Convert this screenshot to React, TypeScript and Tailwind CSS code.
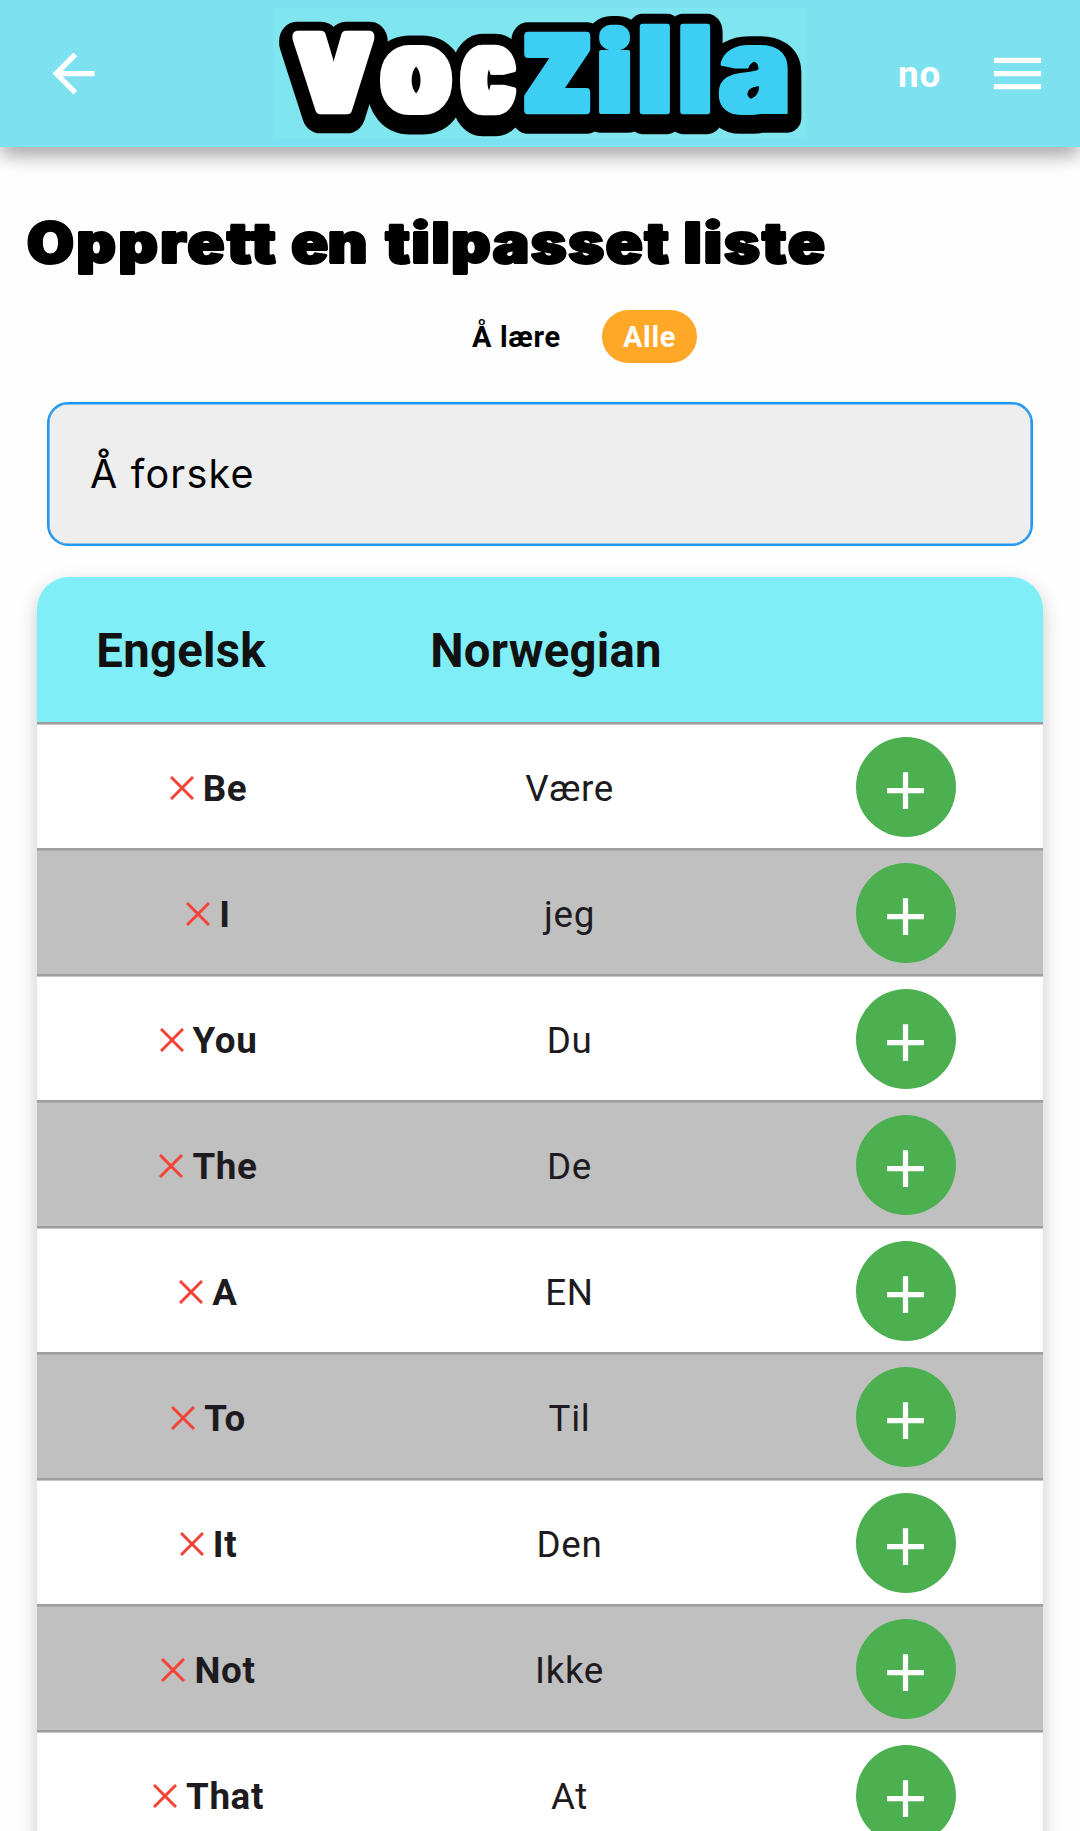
import { useMemo } from "react";

type Letter = {
  ch: string;
  fill: string;
  weight: number;
  edge: number;
  widen: number;
  x0: number;
  x1: number;
  y0: number;
  y1: number;
};

const LOGO: Letter[] = [
  { ch: "V", fill: "#ffffff", weight: 800, edge: 5, widen: 3, x0: 292, x1: 374.7, y0: 30.7, y1: 113.7 },
  { ch: "o", fill: "#ffffff", weight: 700, edge: 2, widen: 6, x0: 379, x1: 453, y0: 45, y1: 115 },
  { ch: "c", fill: "#ffffff", weight: 700, edge: 2, widen: 6, x0: 459, x1: 517.5, y0: 45, y1: 115 },
  { ch: "Z", fill: "#3dcff3", weight: 900, edge: 4, widen: 3, x0: 523, x1: 591, y0: 31, y1: 113.7 },
  { ch: "i", fill: "#3dcff3", weight: 900, edge: 2, widen: 3, x0: 598, x1: 630.5, y0: 23, y1: 113.7 },
  { ch: "l", fill: "#3dcff3", weight: 900, edge: 3, widen: 3, x0: 638.5, x1: 670.5, y0: 23, y1: 113.7 },
  { ch: "l", fill: "#3dcff3", weight: 900, edge: 3, widen: 3, x0: 679, x1: 710.8, y0: 23, y1: 113.7 },
  { ch: "a", fill: "#3dcff3", weight: 600, edge: 1, widen: 6, x0: 718, x1: 788, y0: 45, y1: 115 },
];

const OUTLINE = 13.8;

// Stretches each letter so that its ink, stroke and widening included, fills its box.
function fitLetters(letters: Letter[]) {
  const ctx = document.createElement("canvas").getContext("2d")!;
  return letters.map((b) => {
    ctx.font = `${b.weight} 100px Inter`;
    const m = ctx.measureText(b.ch);
    const w = m.actualBoundingBoxRight + m.actualBoundingBoxLeft;
    const h = m.actualBoundingBoxAscent + m.actualBoundingBoxDescent;
    const ex = b.edge + b.widen;
    const ey = b.edge + 1;
    const sx = (b.x1 - b.x0 - ex * 2) / w;
    const sy = (b.y1 - b.y0 - ey * 2) / h;
    const tx = b.x0 + ex + m.actualBoundingBoxLeft * sx;
    const ty = b.y1 - ey - m.actualBoundingBoxDescent * sy;
    return { ...b, transform: `matrix(${sx} 0 0 ${sy} ${tx} ${ty})` };
  });
}

function Logo() {
  const letters = useMemo(() => fitLetters(LOGO), []);
  return (
    <svg
      viewBox="274 8 532 131"
      className="h-[131px] w-[532px] overflow-visible bg-[#7fe6f0]"
      aria-label="VocZilla"
    >
      <defs>
        <filter id="widen6" filterUnits="userSpaceOnUse" x="250" y="-20" width="600" height="200">
          <feMorphology operator="dilate" radius="6 1" />
        </filter>
        <filter id="widen3" filterUnits="userSpaceOnUse" x="250" y="-20" width="600" height="200">
          <feMorphology operator="dilate" radius="3 1" />
        </filter>
      </defs>
      <g fontFamily="Inter, sans-serif" fontSize={100} strokeLinejoin="round" strokeLinecap="round">
        <g transform="translate(0 5.5)" aria-hidden="true">
          {letters.map((l, i) => (
            <g key={i} filter={l.widen === 6 ? "url(#widen6)" : "url(#widen3)"}>
              <text
                transform={l.transform}
                fontWeight={l.weight}
                fill="#000"
                stroke="#000"
                strokeWidth={(l.edge + OUTLINE) * 2}
                style={{ vectorEffect: "non-scaling-stroke" }}
              >
                {l.ch}
              </text>
            </g>
          ))}
        </g>
        {letters.map((l, i) => (
          <g key={i} filter={l.widen === 6 ? "url(#widen6)" : "url(#widen3)"}>
            <text
              transform={l.transform}
              fontWeight={l.weight}
              fill={l.fill}
              stroke={l.fill}
              strokeWidth={l.edge * 2}
              style={{ vectorEffect: "non-scaling-stroke" }}
            >
              {l.ch}
            </text>
          </g>
        ))}
      </g>
    </svg>
  );
}

const ROWS: [string, string][] = [
  ["Be", "Være"],
  ["I", "jeg"],
  ["You", "Du"],
  ["The", "De"],
  ["A", "EN"],
  ["To", "Til"],
  ["It", "Den"],
  ["Not", "Ikke"],
  ["That", "At"],
];

function Header() {
  return (
    <header className="relative z-10 flex h-[147px] items-center bg-[#7de1ef] shadow-[0_10px_14px_0px_rgba(0,0,0,0.17),0_10px_22px_-4px_rgba(0,0,0,0.22)]">
      <svg viewBox="0 0 24 24" className="ml-[42px] size-[63px] fill-white">
        <path d="M20 11H7.83l5.59-5.59L12 4l-8 8 8 8 1.41-1.41L7.83 13H20v-2z" />
      </svg>
      <div className="ml-[169px]">
        <Logo />
      </div>
      <span className="ml-[92px] w-[44px] pt-[2px] text-[36.75px] font-bold tracking-[0.9px] text-white">no</span>
      <svg viewBox="0 0 24 24" className="ml-[43.5px] size-[63px] fill-white">
        <path d="M3 18h18v-2H3v2zm0-5h18v-2H3v2zm0-7v2h18V6H3z" />
      </svg>
    </header>
  );
}

export default function App() {
  return (
    <div className="h-[1831px] w-[1080px] overflow-hidden bg-[#fefefe] font-[Roboto,sans-serif] text-black">
      <Header />
      <h1 className="mt-[56px] ml-[27px] flex h-[80px] w-max origin-left scale-x-[1.08] items-center whitespace-nowrap font-[Inter,sans-serif] text-[56px] font-black [-webkit-text-stroke:2px_black] [text-shadow:1.5px_0_0_#000,-1.5px_0_0_#000]">
        <span className="mr-[12px] tracking-[2.6px]">Opprett</span>
        <span className="mr-[17px] tracking-[0px]">en</span>
        <span className="mr-[12px] tracking-[1.8px]">tilpasset</span>
        <span className="tracking-[2.2px]">liste</span>
      </h1>
      <div className="mt-[26px] flex h-[54px] items-center text-[28.9px] font-bold">
        <span className="ml-[472px] w-[130px] pt-[3px] tracking-[0.7px]">Å lære</span>
        <span className="flex h-[53px] w-[95px] items-center justify-center rounded-full bg-[#ffa726] pt-[3px] tracking-[0.7px] text-white">
          Alle
        </span>
      </div>
      <div className="mt-[39px] ml-[47px] flex h-[144px] w-[986px] items-center rounded-[21px] border-2 border-[#2196f3] bg-[#eeeeee] pt-[2px] pl-[41px] font-[Inter,sans-serif] text-[39.5px] font-normal tracking-[1.2px] shadow-[inset_0_0_0_0.6px_#2196f3]">
        Å forske
      </div>
      <div className="mt-[31px] ml-[37px] w-[1006px] rounded-t-[32px] shadow-[0_8px_20px_rgba(0,0,0,0.22)]">
        <div className="flex h-[145px] items-center rounded-t-[32px] bg-[#80eef6] pt-[4px] text-[47.25px] font-bold tracking-[0.25px] text-[#111111]">
          <div className="w-[288px] text-center">Engelsk</div>
          <div className="w-[442px] text-center">Norwegian</div>
        </div>
        {ROWS.map(([en, no]) => (
          <div
            key={en}
            className="flex h-[126px] items-center border-t-2 border-[#9e9e9e] pt-[2px] text-[36.75px] tracking-[0.65px] text-[#1d1b20] shadow-[inset_0_1px_0_rgba(158,158,158,0.6)] even:bg-white odd:bg-[#c0c0c0]"
          >
            <div className="flex w-[343px] items-center justify-center gap-[9px] font-bold">
              <svg viewBox="0 0 24 24" className="mt-[1px] size-[24px] stroke-[#f44336]" strokeWidth={3}>
                <path d="M1 1 23 23M23 1 1 23" />
              </svg>
              <span className="pt-[3px]">{en}</span>
            </div>
            <div className="w-[379px] pt-[3px] text-center">{no}</div>
            <div className="ml-[96.5px] flex size-[100px] items-center justify-center rounded-full bg-[#4caf50]">
              <svg viewBox="0 0 24 24" className="mt-[6px] size-[63px] fill-white">
                <path d="M19 13h-6v6h-2v-6H5v-2h6V5h2v6h6v2z" />
              </svg>
            </div>
          </div>
        ))}
      </div>
    </div>
  );
}
